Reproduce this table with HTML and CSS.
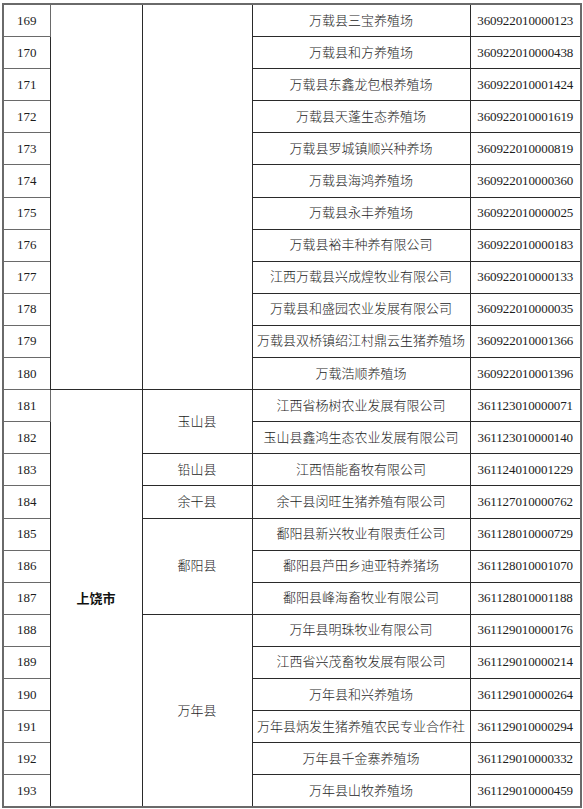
FILE: index.html
```html
<!DOCTYPE html>
<html lang="zh-CN">
<head>
<meta charset="utf-8">
<title>养殖场名录</title>
<link rel="stylesheet" href="styles.css">
</head>
<body>
<table class="list">
  <colgroup>
    <col class="c-no"><col class="c-city"><col class="c-county"><col class="c-name"><col class="c-code">
  </colgroup>
  <tbody>
    <tr><td class="no">169</td><td rowspan="12"></td><td rowspan="12"></td><td>万载县三宝养殖场</td><td class="code">360922010000123</td></tr>
    <tr><td class="no">170</td><td>万载县和方养殖场</td><td class="code">360922010000438</td></tr>
    <tr><td class="no">171</td><td>万载县东鑫龙包根养殖场</td><td class="code">360922010001424</td></tr>
    <tr><td class="no">172</td><td>万载县天蓬生态养殖场</td><td class="code">360922010001619</td></tr>
    <tr><td class="no">173</td><td>万载县罗城镇顺兴种养场</td><td class="code">360922010000819</td></tr>
    <tr><td class="no">174</td><td>万载县海鸿养殖场</td><td class="code">360922010000360</td></tr>
    <tr><td class="no">175</td><td>万载县永丰养殖场</td><td class="code">360922010000025</td></tr>
    <tr><td class="no">176</td><td>万载县裕丰种养有限公司</td><td class="code">360922010000183</td></tr>
    <tr><td class="no">177</td><td>江西万载县兴成煌牧业有限公司</td><td class="code">360922010000133</td></tr>
    <tr><td class="no">178</td><td>万载县和盛园农业发展有限公司</td><td class="code">360922010000035</td></tr>
    <tr><td class="no">179</td><td>万载县双桥镇绍江村鼎云生猪养殖场</td><td class="code">360922010001366</td></tr>
    <tr><td class="no">180</td><td>万载浩顺养殖场</td><td class="code">360922010001396</td></tr>
    <tr><td class="no">181</td><td rowspan="13" class="city">上饶市</td><td rowspan="2">玉山县</td><td>江西省杨树农业发展有限公司</td><td class="code">361123010000071</td></tr>
    <tr><td class="no">182</td><td>玉山县鑫鸿生态农业发展有限公司</td><td class="code">361123010000140</td></tr>
    <tr><td class="no">183</td><td>铅山县</td><td>江西悟能畜牧有限公司</td><td class="code">361124010001229</td></tr>
    <tr><td class="no">184</td><td>余干县</td><td>余干县闵旺生猪养殖有限公司</td><td class="code">361127010000762</td></tr>
    <tr><td class="no">185</td><td rowspan="3">鄱阳县</td><td>鄱阳县新兴牧业有限责任公司</td><td class="code">361128010000729</td></tr>
    <tr><td class="no">186</td><td>鄱阳县芦田乡迪亚特养猪场</td><td class="code">361128010001070</td></tr>
    <tr><td class="no">187</td><td>鄱阳县峰海畜牧业有限公司</td><td class="code">361128010001188</td></tr>
    <tr><td class="no">188</td><td rowspan="6">万年县</td><td>万年县明珠牧业有限公司</td><td class="code">361129010000176</td></tr>
    <tr><td class="no">189</td><td>江西省兴茂畜牧发展有限公司</td><td class="code">361129010000214</td></tr>
    <tr><td class="no">190</td><td>万年县和兴养殖场</td><td class="code">361129010000264</td></tr>
    <tr><td class="no">191</td><td>万年县炳发生猪养殖农民专业合作社</td><td class="code">361129010000294</td></tr>
    <tr><td class="no">192</td><td>万年县千金寨养殖场</td><td class="code">361129010000332</td></tr>
    <tr><td class="no">193</td><td>万年县山牧养殖场</td><td class="code">361129010000459</td></tr>
  </tbody>
</table>
</body>
</html>
```
FILE: styles.css
```css
html, body {
  margin: 0;
  padding: 0;
  background: #ffffff;
}
body {
  padding: 3px 0 0 2px;
  font-family: "Liberation Serif", "Noto Sans CJK SC", serif;
  font-size: 13px;
  color: #1c1c1c;
}
.list {
  border-collapse: collapse;
  table-layout: fixed;
  width: 578px;
  border: 2px solid #6a6a6a;
}
.c-no { width: 47px; }
.c-city { width: 92px; }
.c-county { width: 110px; }
.c-name { width: 218px; }
.c-code { width: 111px; }
.list td {
  height: 31.1px;
  padding: 0;
  border: 1px solid #2a2a2a;
  text-align: center;
  vertical-align: middle;
  white-space: nowrap;
  font-weight: 300;
  line-height: 16px;
}
.list td.no {
  border-color: #6a6a6a;
  font-weight: 400;
}
.list td.code {
  font-weight: 400;
  letter-spacing: -0.1px;
}
.list td.city {
  font-family: "Noto Sans CJK SC", sans-serif;
  font-weight: 700;
  color: #111;
}
```
